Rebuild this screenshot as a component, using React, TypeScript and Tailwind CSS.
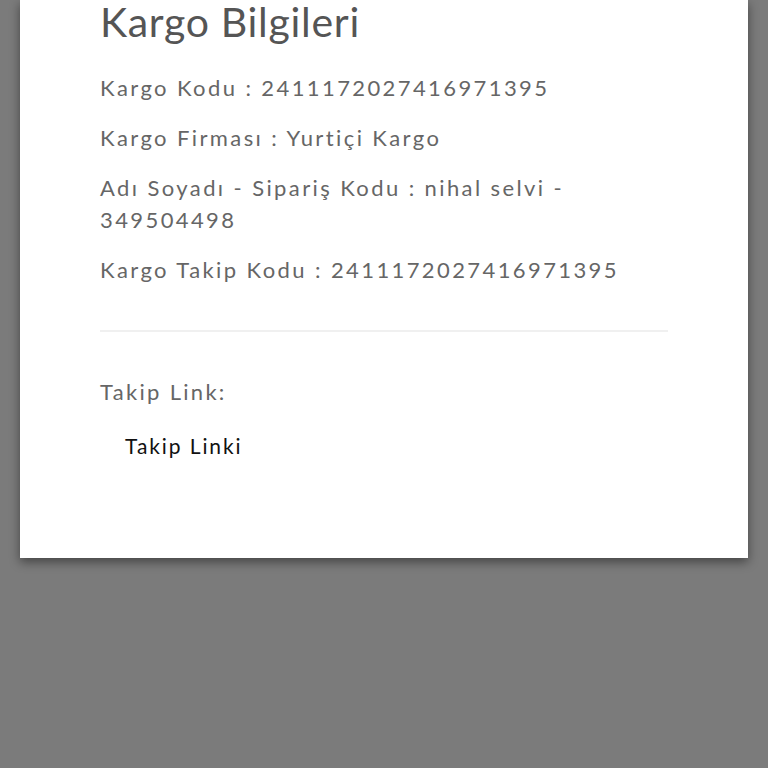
export default function App() {
  const rows = [
    "Kargo Kodu : 2411172027416971395",
    "Kargo Firması : Yurtiçi Kargo",
    "Adı Soyadı - Sipariş Kodu : nihal selvi - 349504498",
    "Kargo Takip Kodu : 2411172027416971395",
  ];

  return (
    <div className="h-[768px] w-[768px] overflow-hidden bg-[#7b7b7b] font-['Lato','Liberation_Sans',sans-serif]">
      <div className="mx-[20px] flex h-[558px] flex-col bg-white px-[80px] shadow-[0_4px_10px_rgba(0,0,0,0.45)]">
        <h1 className="text-[41px] leading-[44px] tracking-[0.7px] text-[#555]">Kargo Bilgileri</h1>
        <div className="mt-[28px] flex flex-col gap-[18px]">
          {rows.map((r) => (
            <p key={r} className="text-[22px] leading-[32px] tracking-[2.4px] text-[#666]">
              {r}
            </p>
          ))}
        </div>
        <div className="mt-[44px] h-[2px] bg-[#f0f0f0]" />
        <p className="mt-[44px] text-[22px] leading-[32px] tracking-[2.3px] text-[#666]">Takip Link:</p>
        <a className="mt-[22px] ml-[25px] block text-[21px] leading-[32px] tracking-[1.9px] text-[#111]">Takip Linki</a>
      </div>
    </div>
  );
}
